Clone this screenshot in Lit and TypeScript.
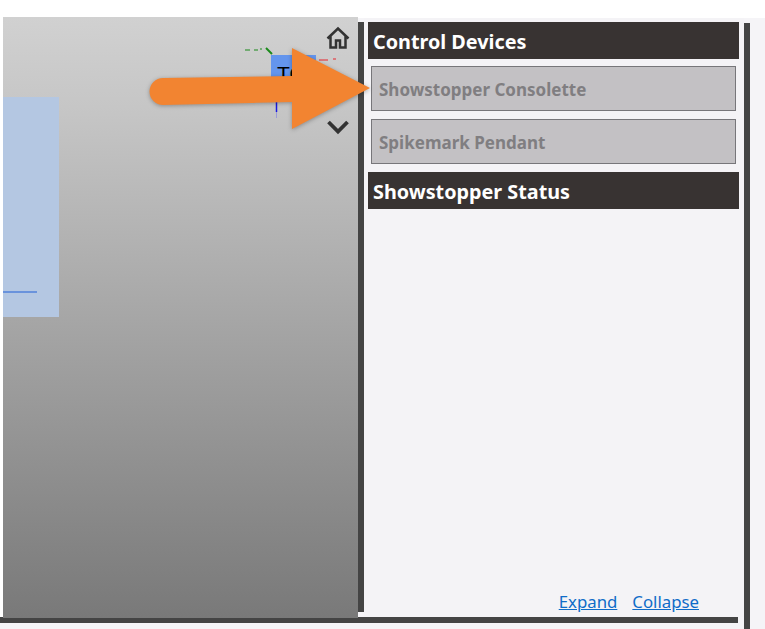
import { LitElement, html, css, svg } from 'lit';
import { customElement } from 'lit/decorators.js';

@customElement('app-root')
export class AppRoot extends LitElement {
  static styles = css`
    :host {
      display: block;
      position: relative;
      width: 765px;
      height: 629px;
      overflow: hidden;
      background: #f5f4f7;
      font-family: "Noto Sans", "Open Sans", sans-serif;
    }

    .top {
      display: flex;
      height: 617px;
      background: linear-gradient(#fff 0, #fff 18px, transparent 18px);
    }

    .gutter {
      width: 3px;
      background: #fff;
    }

    .viewport {
      position: relative;
      width: 355px;
      height: 601px;
      margin-top: 17px;
      background: linear-gradient(#d1d1d1, #c6c6c6 15%, #797979);
      overflow: hidden;
    }

    .plane {
      position: absolute;
      left: 0;
      top: 80px;
      width: 56px;
      height: 220px;
      background: #b4c7e2;
    }

    .plane-line {
      position: absolute;
      left: 0;
      top: 194px;
      width: 34px;
      height: 2px;
      background: #6a93dc;
    }

    .cube {
      position: absolute;
      left: 268px;
      top: 38px;
      width: 45px;
      height: 45px;
      background: #6495ed;
      color: #000;
      font-size: 21px;
      line-height: 38px;
      padding-left: 6px;
      box-sizing: border-box;
      font-family: "Liberation Sans", sans-serif;
    }

    .axes {
      position: absolute;
      left: 238px;
      top: 28px;
    }

    .home {
      position: absolute;
      left: 323px;
      top: 9px;
    }

    .chevron {
      position: absolute;
      left: 323px;
      top: 102px;
    }

    .divider {
      width: 6px;
      height: 590px;
      margin-top: 22px;
      background: #444;
    }

    .panel {
      width: 380px;
      margin-top: 18px;
      padding: 4px 5px 0 4px;
      box-sizing: border-box;
      background: #f4f3f6;
      display: flex;
      flex-direction: column;
    }

    .header {
      height: 37px;
      background: #383332;
      color: #fff;
      font-size: 19.800px;
      font-weight: 700;
      line-height: 39px;
      padding-left: 5px;
    }

    .device {
      height: 45px;
      margin: 7px 3px 8px 3px;
      background: #c3c1c4;
      border: 1px solid #77767a;
      box-sizing: border-box;
      color: #807e81;
      font-size: 17px;
      font-weight: 700;
      line-height: 46px;
      padding-left: 7px;
    }

    .device + .device {
      margin-top: 0;
    }

    .links {
      margin-top: auto;
      display: flex;
      justify-content: flex-end;
      gap: 15px;
      padding: 0 40px 3px 0;
      font-size: 16.800px;
      line-height: 24px;
    }

    .links a {
      color: #0f6cc8;
      text-decoration: underline;
    }

    .rail {
      width: 6px;
      height: 606px;
      margin-top: 23px;
      background: #444;
    }

    .bottom-bar {
      width: 738px;
      height: 6px;
      background: #444;
    }

    .arrow {
      position: absolute;
      left: 0;
      top: 0;
      filter: drop-shadow(0 1px 2px rgba(0, 0, 0, 0.3));
    }
  `;

  render() {
    return html`
      <div class="top">
        <div class="gutter"></div>
        <div class="viewport">
          <div class="plane"><div class="plane-line"></div></div>
          <svg class="axes" width="100" height="90" viewBox="0 0 100 90" fill="none">
            ${svg`<path d="M4 5h5M13 5h4M19 4h2" stroke="#1a8a1a" stroke-width="1.200"/>
            <path d="M25 3l6 6" stroke="#1a8a1a" stroke-width="2"/>
            <path d="M78 15h9M92 14h3" stroke="#e8242c" stroke-width="1.200"/>
            <path d="M35.500 55v12" stroke="#1a1ae0" stroke-width="1.500"/>
            <path d="M35.500 67v6" stroke="#9a9ad8" stroke-width="1"/>`}
          </svg>
          <div class="cube">TO</div>
          <svg class="home" width="24" height="24" viewBox="0 0 24 24" fill="none" stroke="#333" stroke-width="2.500" stroke-linejoin="miter">
            <path d="M1.500 12.500L12 2.500l10.500 10M4.500 10.500V21.500h5.500v-7h4v7h5.500V10.500"/>
          </svg>
          <svg class="chevron" width="24" height="16" viewBox="0 0 24 16" fill="none" stroke="#333" stroke-width="3.800">
            <path d="M2.500 3L12 12.500 21.500 3"/>
          </svg>
        </div>
        <div class="divider"></div>
        <div class="panel">
          <div class="header">Control Devices</div>
          <div class="device">Showstopper Consolette</div>
          <div class="device">Spikemark Pendant</div>
          <div class="header">Showstopper Status</div>
          <div class="links">
            <a>Expand</a>
            <a>Collapse</a>
          </div>
        </div>
        <div class="rail"></div>
      </div>
      <div class="bottom-bar"></div>
      <svg class="arrow" width="400" height="160" viewBox="0 0 400 160">
        <path fill="#f28431" d="M163 78L292 76V48L370 88L292 129V102L163 105A13.500 13.500 0 0 1 163 78Z"/>
      </svg>
    `;
  }
}
